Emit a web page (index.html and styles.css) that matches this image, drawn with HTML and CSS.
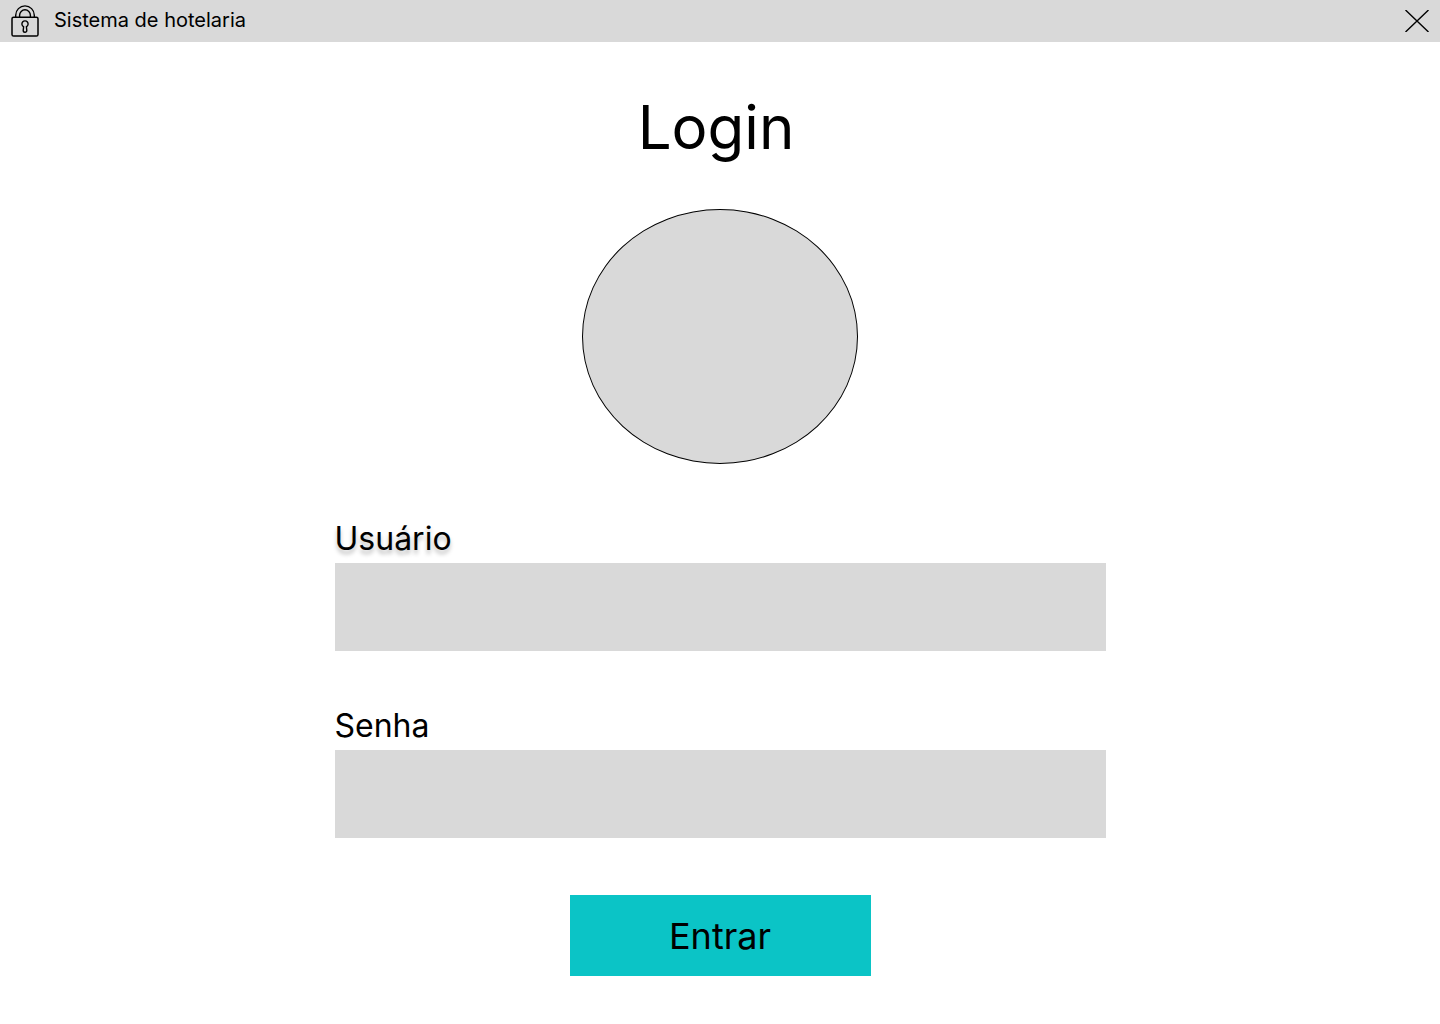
FILE: index.html
```html
<!DOCTYPE html>
<html lang="pt-BR">
<head>
<meta charset="utf-8">
<meta name="viewport" content="width=device-width, initial-scale=1">
<title>Sistema de hotelaria</title>
<link rel="stylesheet" href="styles.css">
</head>
<body>
<header class="titlebar">
  <svg class="titlebar-lock" viewBox="0 0 28 32" fill="none" stroke="#000" aria-hidden="true">
    <rect x="1" y="12.2" width="26" height="18.8" rx="1.6" stroke-width="1.5"/>
    <path d="M4.7 12V10.2a9.3 9.3 0 0 1 18.6 0V12M8.6 12v-1.8a5.4 5.4 0 0 1 10.8 0V12" stroke-width="1.4"/>
    <path d="M12.6 21.7a3.1 3.1 0 1 1 2.8 0l.4 3.8a1.8 1.8 0 0 1-3.6 0z" stroke-width="1.4" stroke-linejoin="round"/>
  </svg>
  <span class="titlebar-name">Sistema de hotelaria</span>
  <button class="titlebar-close" type="button" aria-label="Fechar">
    <svg class="close-icon" viewBox="0 0 24 22" fill="none" stroke="#000" stroke-width="1.4" aria-hidden="true">
      <path d="M0.5 0l23 22M23.5 0l-23 22"/>
    </svg>
  </button>
</header>
<main class="login">
  <h1 class="login-title">Login</h1>
  <div class="avatar"></div>
  <form class="login-form">
    <div class="field">
      <label class="field-label field-label-raised" for="usuario">Usuário</label>
      <input class="field-input" id="usuario" type="text" autocomplete="username">
    </div>
    <div class="field">
      <label class="field-label" for="senha">Senha</label>
      <input class="field-input" id="senha" type="password" autocomplete="current-password">
    </div>
    <button class="submit" type="submit">Entrar</button>
  </form>
</main>
</body>
</html>
```
FILE: styles.css
```css
* {
  box-sizing: border-box;
}

body {
  margin: 0;
  background: #fff;
  color: #000;
  font-family: Inter, "Liberation Sans", sans-serif;
}

.titlebar {
  display: flex;
  align-items: center;
  height: 42px;
  padding: 0 11px;
  background: #d9d9d9;
}

.titlebar-lock {
  width: 28px;
  height: 32px;
  margin-right: 15px;
}

.titlebar-name {
  flex: 1;
  font-size: 20px;
  line-height: 24px;
  padding-bottom: 2px;
}

.titlebar-close {
  display: flex;
  padding: 0;
  border: 0;
  background: none;
  cursor: pointer;
}

.close-icon {
  width: 24px;
  height: 22px;
}

.login {
  display: flex;
  flex-direction: column;
  align-items: center;
  padding: 49px 24px 48px;
}

.login-title {
  margin: 0 0 46px;
  padding-right: 8px;
  font-size: 60px;
  font-weight: 400;
  line-height: 72px;
}

.avatar {
  width: 276px;
  height: 255px;
  border: 1px solid #000;
  border-radius: 50%;
  background: #d9d9d9;
}

.login-form {
  display: flex;
  flex-direction: column;
  align-items: center;
  gap: 55px;
  width: 100%;
  max-width: 771px;
  margin-top: 55px;
}

.field {
  display: flex;
  flex-direction: column;
  align-items: flex-start;
  gap: 4px;
  width: 100%;
}

.field-label {
  font-size: 32px;
  line-height: 40px;
}

.field-label-raised {
  text-shadow: 0 4px 4px rgba(0, 0, 0, 0.25);
}

.field-input {
  width: 100%;
  height: 88px;
  padding: 0 24px;
  border: 0;
  border-radius: 0;
  background: #d9d9d9;
  font: inherit;
  font-size: 32px;
}

.submit {
  width: 301px;
  height: 81px;
  margin-top: 2px;
  padding: 0;
  border: 0;
  background: #0bc4c6;
  color: #000;
  font: inherit;
  font-size: 36px;
  cursor: pointer;
}
```
